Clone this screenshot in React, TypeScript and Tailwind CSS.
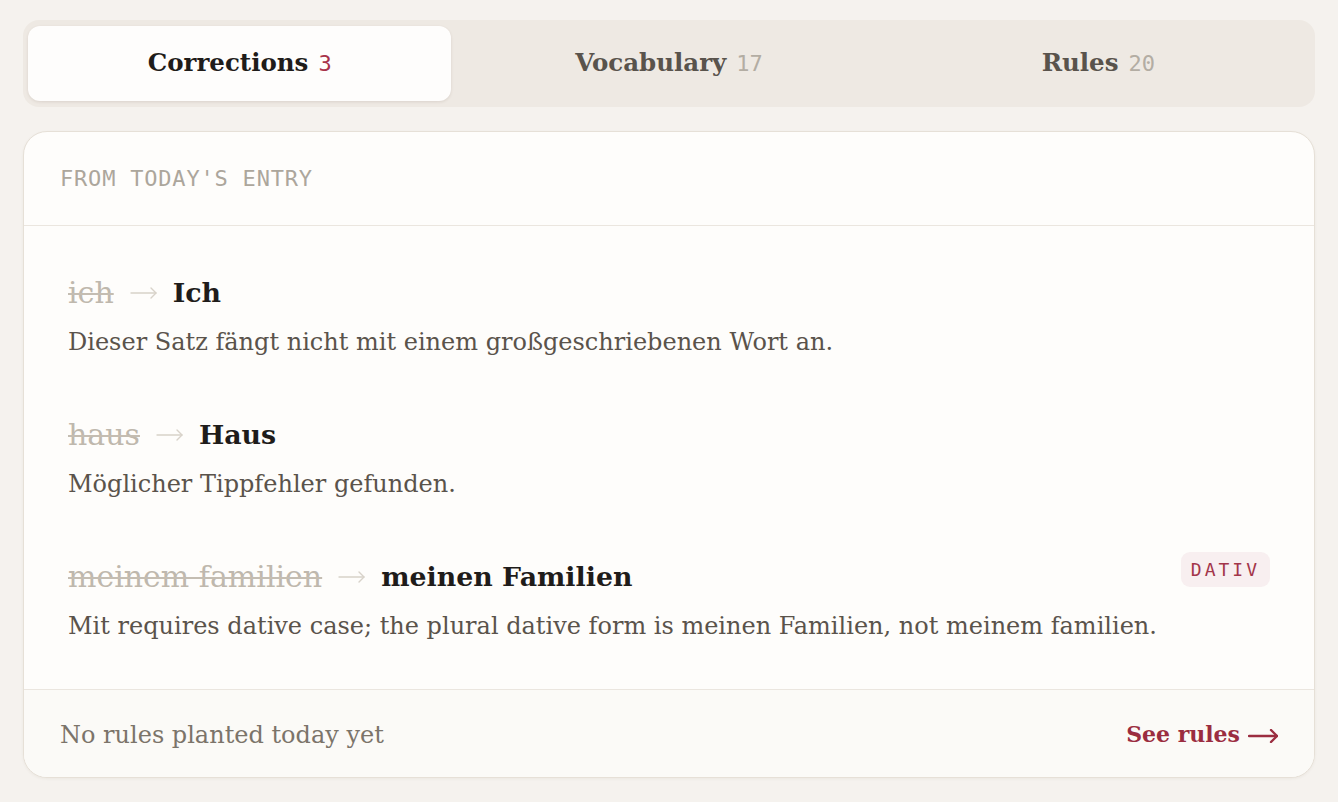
import React, { useState } from "react";

const serif = "font-['DejaVu_Serif',serif]";
const mono = "font-['DejaVu_Sans_Mono',monospace]";

const tabs = [
  { key: "corrections", title: "Corrections", count: 3 },
  { key: "vocabulary", title: "Vocabulary", count: 17 },
  { key: "rules", title: "Rules", count: 20 },
];

const corrections = [
  {
    wrong: "ich",
    right: "Ich",
    note: "Dieser Satz fängt nicht mit einem großgeschriebenen Wort an.",
  },
  {
    wrong: "haus",
    right: "Haus",
    note: "Möglicher Tippfehler gefunden.",
  },
  {
    wrong: "meinem familien",
    right: "meinen Familien",
    note: "Mit requires dative case; the plural dative form is meinen Familien, not meinem familien.",
    tag: "DATIV",
  },
];

// long thin arrow, like the typographic →
const Arrow = ({
  className,
  width,
  height,
  stroke,
}: {
  className: string;
  width: number;
  height: number;
  stroke: number;
}) => {
  const mid = height / 2;
  const head = height / 2 - 1;
  return (
    <svg
      width={width}
      height={height}
      viewBox={`0 0 ${width} ${height}`}
      fill="none"
      stroke="currentColor"
      strokeWidth={stroke}
      strokeLinecap="round"
      strokeLinejoin="round"
      className={className}
    >
      <path d={`M1 ${mid}H${width - 1}`} />
      <path d={`M${width - 1 - head} ${mid - head}L${width - 1} ${mid}L${width - 1 - head} ${mid + head}`} />
    </svg>
  );
};

const App = () => {
  const [active, setActive] = useState("corrections");

  return (
    <div className="min-h-screen bg-[#f5f2ee] px-[23px] pt-[20px] pb-6">
      {/* tab switcher */}
      <div className="flex gap-[6px] rounded-[16px] bg-[#eee9e3] px-[5px] py-[6px]">
        {tabs.map((tab) => {
          const isActive = tab.key === active;
          return (
            <button
              key={tab.key}
              onClick={() => setActive(tab.key)}
              className={
                isActive
                  ? "flex h-[75px] flex-1 items-center justify-center gap-[10px] rounded-[12px] bg-[#fefdfc] shadow-[0_1px_3px_rgba(80,60,40,0.12)]"
                  : "flex h-[75px] flex-1 items-center justify-center gap-[10px] rounded-[12px]"
              }
            >
              <span
                className={`${serif} text-[24.5px] font-bold ${
                  isActive ? "text-[#1f1c1a]" : "text-[#59534c]"
                }`}
              >
                {tab.title}
              </span>
              <span
                className={`${mono} text-[22px] ${
                  isActive ? "text-[#a8334a]" : "text-[#b3ada3]"
                }`}
              >
                {tab.count}
              </span>
            </button>
          );
        })}
      </div>

      {/* corrections card */}
      <div className="mt-[24px] overflow-hidden rounded-[24px] border border-[#e6e0d7] bg-[#fefdfb] shadow-[0_1px_3px_rgba(80,60,40,0.06)]">
        <div className="flex h-[94px] items-center border-b border-[#ebe6df] px-[36px]">
          <span className={`${mono} text-[22px] tracking-[0.8px] text-[#aca69c]`}>
            FROM TODAY'S ENTRY
          </span>
        </div>

        <div className="flex flex-col gap-[58px] px-[44px] pt-[49px] pb-[46px]">
          {corrections.map((item) => (
            <div key={item.wrong} className="flex items-start justify-between">
              <div className="flex flex-col gap-[14px]">
                <div className={`${serif} flex h-[36px] items-center gap-[16px]`}>
                  <span className="text-[30px] leading-[36px] text-[#bfb8ad] line-through decoration-[#c4bdb2] decoration-[2px]">
                    {item.wrong}
                  </span>
                  <Arrow className="text-[#d8d2c9]" width={27} height={12} stroke={1.4} />
                  <span className="text-[26.8px] font-bold text-[#1f1c1a]">
                    {item.right}
                  </span>
                </div>
                <p className={`${serif} text-[24px] leading-[34px] text-[#5a534b]`}>
                  {item.note}
                </p>
              </div>
              {item.tag && (
                <span
                  className={`${mono} mt-[-7px] flex h-[35px] items-center rounded-[9px] bg-[#f8eff0] px-[10px] text-[18px] tracking-[3px] text-[#a3364a]`}
                >
                  {item.tag}
                </span>
              )}
            </div>
          ))}
        </div>

        <div className="flex h-[88px] items-center justify-between border-t border-[#ebe6df] bg-[#fbfaf7] px-[36px] pt-[2px]">
          <span className={`${serif} text-[24px] text-[#7b746a]`}>
            No rules planted today yet
          </span>
          <a
            href="#"
            className={`${serif} flex items-center gap-[8px] text-[22px] font-bold text-[#9b2d40]`}
          >
            See rules
            <Arrow className="mt-[2px]" width={30} height={14} stroke={2.4} />
          </a>
        </div>
      </div>
    </div>
  );
};

export default App;
